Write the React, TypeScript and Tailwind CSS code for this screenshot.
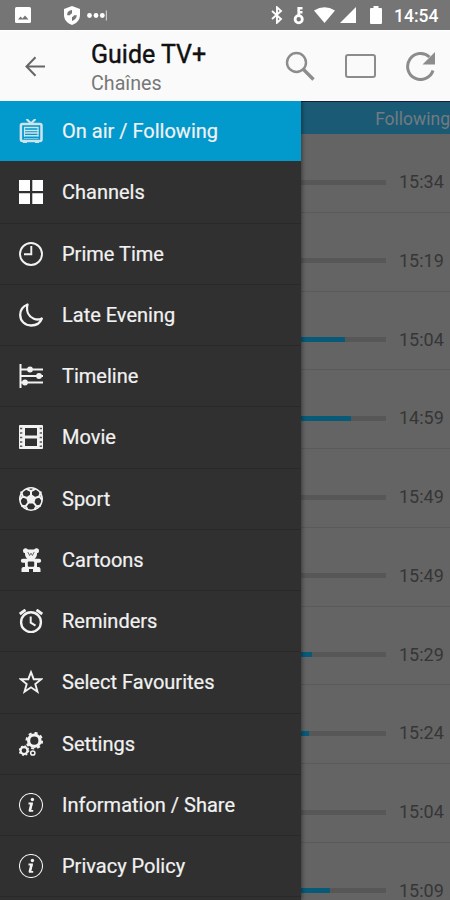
import type { ReactNode } from "react";

const Tv = () => (
  <svg className="size-6" viewBox="0 0 24 24" fill="none" stroke="currentColor" opacity="0.85">
    <path d="M7.500 0l4.500 4.500L16.500 0" strokeWidth="2.200" />
    <rect x="1.900" y="4.900" width="20.600" height="17" rx="1.500" strokeWidth="2.500" />
    <path d="M4 23.300h4M16 23.300h4" strokeWidth="1.400" />
    <path d="M5 8.500h14.500M5 11.500h14.500M5 14h14.500M5 16.800h14.500" strokeWidth="1.400" />
    <path d="M5 19.500h14.500" strokeWidth="1" opacity=".6" />
    <path d="M5.500 8v9.500M19 8v9.500" strokeWidth="1.200" />
  </svg>
);
const Grid = () => (
  <svg className="size-6" viewBox="0 0 24 24" fill="#fff">
    <path d="M0 0h11v11H0zM13.300 0h10.700v11H13.300zM0 13.300h11V24H0zM13.300 13.300h10.700V24H13.300z" />
  </svg>
);
const Clock = () => (
  <svg className="size-6" viewBox="0 0 24 24" fill="none" stroke="currentColor" strokeWidth="1.900">
    <circle cx="12" cy="12" r="11" />
    <path d="M12.300 4v8.300H5" />
  </svg>
);
const Moon = () => (
  <svg className="size-6" viewBox="0 0 24 24" fill="none" stroke="currentColor" strokeWidth="2.300" strokeLinejoin="round">
    <path d="M8.500 1.500C3.500 3.500 1.200 7.500 1.200 12c0 6 4.800 10.500 11 10.500 4.800 0 9-2.500 10.600-7-2.500 1.300-5.300 1.300-8 .2C9.500 13.500 7 8 8.500 1.500z" />
  </svg>
);
const Timeline = () => (
  <svg className="size-6" viewBox="0 0 24 24" fill="currentColor" stroke="currentColor" strokeWidth="2">
    <path d="M1.500 0v24M1 5.500h23M1 12h23M1 18.500h23" />
    <circle cx="11" cy="5.500" r="1.900" />
    <circle cx="20" cy="12" r="1.900" />
    <circle cx="6" cy="18.500" r="1.900" />
  </svg>
);
const Film = () => (
  <svg className="size-6" viewBox="0 0 24 24" fill="currentColor">
    <rect width="24" height="24" rx="1" />
    <path fill="#303030" d="M6 3h12v7.500H6zM6 13.500h12v7.500H6z" />
    <path fill="#303030" opacity=".8" d="M1 2.700h2.300v1.600H1zM1 7.200h2.300v1.600H1zM1 11.700h2.300v1.600H1zM1 16.200h2.300v1.600H1zM1 20.500h2.300V22H1zM20.700 2.700H23v1.600h-2.300zM20.700 7.200H23v1.600h-2.300zM20.700 11.700H23v1.600h-2.300zM20.700 16.200H23v1.600h-2.300zM20.700 20.500H23V22h-2.300z" />
  </svg>
);
const Ball = () => (
  <svg className="size-6" viewBox="0 0 24 24">
    <circle cx="12" cy="12" r="11.200" fill="#303030" stroke="currentColor" strokeWidth="1.500" />
    <path fill="currentColor" d="M12 7l5 3.600-1.900 5.900H8.900L7 10.600z" />
    <path stroke="currentColor" strokeWidth="2" fill="none" d="M12 8V4.200L7.500 1.800M12 4.200l4.500-2.400M16 11l4.300-1.600L22 4.500M20.300 9.400l3 3.600M14.500 15.500l2.800 3.700 4.500-.5M17.300 19.200l-1.800 3.500M9.500 15.500l-2.800 3.700-4.500-.5M6.700 19.200l1.800 3.500M8 11L3.700 9.400 2 4.500M3.700 9.400l-3 3.600" />
  </svg>
);
const Bear = () => (
  <svg className="size-6" viewBox="0 0 24 24" fill="currentColor">
    <circle cx="6.500" cy="2.700" r="2.500" />
    <circle cx="17.500" cy="2.700" r="2.500" />
    <path d="M6 1.500h12V6c0 2-1 4-2.500 4.800h4.700a1.900 1.900 0 0 1 0 3.900H18V19h1.500c1.500 0 2 1 2 2.500V24H14v-3h-4v3H2.500v-2.500c0-1.500.5-2.500 2-2.500H6v-4.300H3.800a1.900 1.900 0 0 1 0-3.900h4.700C7 10 6 8 6 6z" />
    <rect x="8.800" y="13.500" width="6.400" height="5.300" rx="1" fill="#303030" />
    <path d="M8.800 4l1.800 3.500L12 5.200l1.400 2.300L15.200 4" stroke="#303030" strokeWidth=".7" fill="none" />
  </svg>
);
const Alarm = () => (
  <svg className="size-6" viewBox="0 0 24 24" fill="none" stroke="currentColor">
    <circle cx="12" cy="13.200" r="9.900" strokeWidth="2.400" />
    <path d="M11.700 7.500v6.200l4.800 3" strokeWidth="2" />
    <path d="M.8 5L6.500.8M23.200 5L17.500.8" strokeWidth="2.800" />
  </svg>
);
const Star = () => (
  <svg className="size-6" viewBox="0 0 24 24" fill="none" stroke="currentColor" strokeWidth="1.900">
    <path d="M12 2.200l2.700 7h7.600l-6 4.800 2.200 7.700L12 17.300l-6.500 4.400L7.700 14l-6-4.800h7.600z" />
  </svg>
);
const Gears = () => (
  <svg className="size-6" viewBox="0 0 24 24" fill="none" stroke="currentColor">
    <circle cx="15.300" cy="8.700" r="5.700" strokeWidth="3.200" />
    <circle cx="15.300" cy="8.700" r="7.800" strokeWidth="2" strokeDasharray="3.100 3.026" />
    <circle cx="5" cy="18.600" r="3.500" strokeWidth="2.200" />
    <circle cx="5" cy="18.600" r="4.700" strokeWidth="1.300" strokeDasharray="1.800 1.891" />
    <circle cx="13.800" cy="21" r="2.100" strokeWidth="1.500" />
  </svg>
);
const Info = () => (
  <svg className="size-6" viewBox="0 0 24 24" fill="none" stroke="currentColor">
    <circle cx="12" cy="12" r="11.500" strokeWidth="1.100" />
    <circle cx="13.400" cy="6.500" r="1.700" fill="currentColor" stroke="none" />
    <path d="M9.500 10.500h3.300l-1.900 7.300h3.300" strokeWidth="1.800" />
    <path d="M12.700 10l-2 8" strokeWidth="2.500" />
  </svg>
);

const menu: { label: string; icon: ReactNode }[] = [
  { label: "On air / Following", icon: <Tv /> },
  { label: "Channels", icon: <Grid /> },
  { label: "Prime Time", icon: <Clock /> },
  { label: "Late Evening", icon: <Moon /> },
  { label: "Timeline", icon: <Timeline /> },
  { label: "Movie", icon: <Film /> },
  { label: "Sport", icon: <Ball /> },
  { label: "Cartoons", icon: <Bear /> },
  { label: "Reminders", icon: <Alarm /> },
  { label: "Select Favourites", icon: <Star /> },
  { label: "Settings", icon: <Gears /> },
  { label: "Information / Share", icon: <Info /> },
  { label: "Privacy Policy", icon: <Info /> },
];

const programs = [
  { end: "15:34", filled: 0 },
  { end: "15:19", filled: 0 },
  { end: "15:04", filled: 44 },
  { end: "14:59", filled: 50 },
  { end: "15:49", filled: 0 },
  { end: "15:49", filled: 0 },
  { end: "15:29", filled: 11 },
  { end: "15:24", filled: 8 },
  { end: "15:04", filled: 0 },
  { end: "15:09", filled: 29 },
];

function StatusBar() {
  return (
    <div className="flex h-[30px] shrink-0 items-center bg-[#757575] text-white">
      <svg className="ml-[15px] size-4" viewBox="0 0 16 16">
        <rect width="16" height="16" rx="1.500" fill="#fff" />
        <path d="M3 12.500l2.500-3 2 2 2.500-3 3.500 4z" fill="#757575" />
      </svg>
      <svg className="ml-[33px] h-[19px] w-4" viewBox="0 0 16 19">
        <path d="M8 0l8 3v6c0 5-3.500 8.500-8 10-4.500-1.500-8-5-8-10V3z" fill="#fff" />
        <path d="M8 4v5.200H3.200C3.200 5.500 5 4.500 8 4zM12.800 9.200H8V15c3-1 4.500-3 4.800-5.800z" fill="#757575" />
        <circle cx="8" cy="9.300" r="1.800" fill="#fff" />
      </svg>
      <svg className="ml-[7px] h-3 w-[21px]" viewBox="0 0 21 12" fill="#fff">
        <circle cx="2.500" cy="6.500" r="2.400" />
        <circle cx="9" cy="6.500" r="2.400" />
        <circle cx="15.300" cy="6.500" r="2.400" />
        <path d="M18.800 1.500h1.200v10h-1.200z" opacity=".6" />
      </svg>
      <svg className="ml-auto h-[18px] w-3" viewBox="0 0 12 18" fill="none" stroke="#fff" strokeWidth="1.900">
        <path d="M1 5l9 8-4 3.700V1.300L10 5l-9 8" />
      </svg>
      <svg className="ml-[10px] h-[19px] w-3" viewBox="0 0 12 19" fill="none" stroke="#fff">
        <circle cx="5.700" cy="13.300" r="3.600" strokeWidth="2.800" />
        <path d="M5.700 10V1M5 2.200h4.500M5 6.200h4.500" strokeWidth="2.600" />
      </svg>
      <svg className="ml-[9px] h-4 w-[21px]" viewBox="0 0 21 16" fill="#fff">
        <path d="M0 3.500Q10.500-3 21 3.500L10.500 16z" />
      </svg>
      <svg className="ml-[5px] size-4" viewBox="0 0 16 16" fill="#fff">
        <path d="M16 0v16H0z" />
      </svg>
      <svg className="ml-[14px] h-[18px] w-3" viewBox="0 0 12 18" fill="#fff">
        <path d="M3.500 0h5v2H11a1 1 0 0 1 1 1v14a1 1 0 0 1-1 1H1a1 1 0 0 1-1-1V3a1 1 0 0 1 1-1h2.500z" />
      </svg>
      <span className="mr-[12px] ml-[12px] w-[44px] pt-0.5 text-[17.500px] leading-5 font-medium">14:54</span>
    </div>
  );
}

function Toolbar() {
  return (
    <div className="flex h-[71px] shrink-0 items-center border-t border-white bg-[#fafafa]">
      <svg className="ml-[25px] h-[21px] w-5" viewBox="0 0 20 21" fill="none" stroke="#666" strokeWidth="2">
        <path d="M20 10.500H1.500M10.500 1.300L1.500 10.500l9 9.200" />
      </svg>
      <div className="ml-[46px] flex flex-col pt-[5px]">
        <span className="text-[25px] leading-[30px] text-[#111] [-webkit-text-stroke:0.400px_#111]">Guide TV+</span>
        <span className="text-[19.700px] leading-7 text-[#777]">Chaînes</span>
      </div>
      <svg className="ml-auto h-[30px] w-[30px]" viewBox="0 0 30 30" fill="none" stroke="#8c8c8c">
        <circle cx="11.500" cy="11.500" r="9.500" strokeWidth="2.400" />
        <path d="M18.500 18.500l10 10" strokeWidth="3.400" />
      </svg>
      <span className="ml-[30px] h-6 w-[31px] rounded-[3px] border-[2.500px] border-[#8c8c8c]" />
      <svg className="mr-[14px] ml-[29px] h-[30px] w-[31px]" viewBox="0 0 31 30" fill="none" stroke="#8c8c8c">
        <path d="M28 19.500A13 13 0 1 1 24.500 6" strokeWidth="3" />
        <path d="M30 1v12.500H17.500z" fill="#8c8c8c" stroke="none" />
      </svg>
    </div>
  );
}

export default function App() {
  return (
    <div className="flex h-[900px] w-[450px] flex-col overflow-hidden font-[Roboto,sans-serif]">
      <StatusBar />
      <Toolbar />
      <div className="flex h-[799px] overflow-hidden bg-[#646464]">
        <nav className="z-10 w-[301px] shrink-0 bg-[#303030] shadow-[1px_0_4px_rgba(0,0,0,0.450)]">
          {menu.map((item, i) => (
            <div
              key={item.label}
              className={`flex h-[61.250px] items-center border-b pl-[19px] text-[#f2f2f2] ${i === 0 ? "border-[#303030] bg-[#0299cd]" : "border-[#292929]"}`}
            >
              {item.icon}
              <span className="ml-[19px] text-[20px] leading-6 whitespace-nowrap [-webkit-text-stroke:0.200px_#f2f2f2]">{item.label}</span>
            </div>
          ))}
        </nav>
        <main className="w-[149px] shrink-0 overflow-hidden">
          <div className="flex h-[33px] items-center justify-end border-t border-[#191b45] bg-[#1b5a75]">
            <span className="pt-px text-[17.500px] leading-6 text-[#727b80]">Following</span>
          </div>
          {programs.map((p, i) => (
            <div key={i} className="h-[78.750px] border-b border-[#5a5a5a] pt-[36px]">
              <div className="flex h-6 items-center">
                <div className="h-[5px] w-[85px] bg-[#575757]">
                  <div className="h-full bg-[#075a78]" style={{ width: p.filled }} />
                </div>
                <span className="ml-[13px] text-[18px] leading-6 text-[#363636]">{p.end}</span>
              </div>
            </div>
          ))}
        </main>
      </div>
    </div>
  );
}
